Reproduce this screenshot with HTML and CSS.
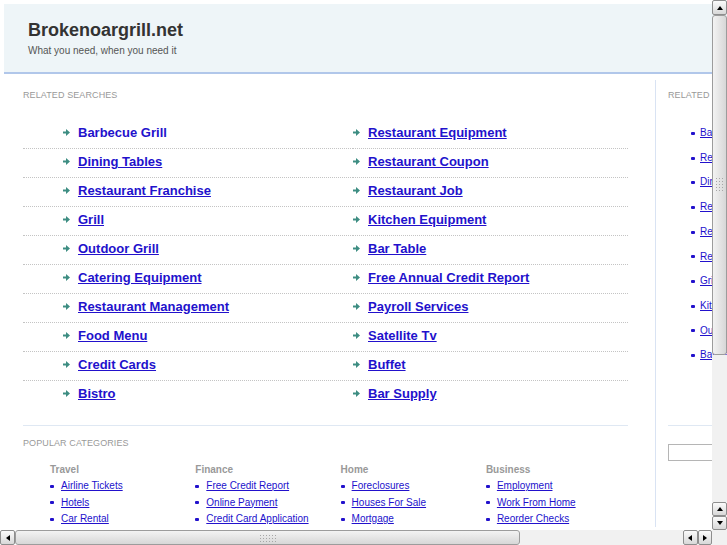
FILE: index.html
```html
<!DOCTYPE html>
<html lang="en">
<head>
    <meta charset="UTF-8">
    <meta name="viewport" content="width=device-width, initial-scale=1.0">
    <title>Brokenoargrill.net</title>
    <link rel="stylesheet" href="styles.css">
</head>
<body>
    <div class="page">
        <div class="header">
            <h1>Brokenoargrill.net</h1>
            <p>What you need, when you need it</p>
        </div>
        <div class="content">
            <div class="main">
                <h3 class="label">Related Searches</h3>
                <ul class="searches">
                    <li class="plain"><svg viewBox="0 0 7 7"><path d="M0 2.5h3V0l4 3.5L3 7V4.5H0z"/></svg><a href="#">Barbecue Grill</a></li>
                    <li><svg viewBox="0 0 7 7"><path d="M0 2.5h3V0l4 3.5L3 7V4.5H0z"/></svg><a href="#">Restaurant Equipment</a></li>
                    <li><svg viewBox="0 0 7 7"><path d="M0 2.5h3V0l4 3.5L3 7V4.5H0z"/></svg><a href="#">Dining Tables</a></li>
                    <li><svg viewBox="0 0 7 7"><path d="M0 2.5h3V0l4 3.5L3 7V4.5H0z"/></svg><a href="#">Restaurant Coupon</a></li>
                    <li><svg viewBox="0 0 7 7"><path d="M0 2.5h3V0l4 3.5L3 7V4.5H0z"/></svg><a href="#">Restaurant Franchise</a></li>
                    <li><svg viewBox="0 0 7 7"><path d="M0 2.5h3V0l4 3.5L3 7V4.5H0z"/></svg><a href="#">Restaurant Job</a></li>
                    <li><svg viewBox="0 0 7 7"><path d="M0 2.5h3V0l4 3.5L3 7V4.5H0z"/></svg><a href="#">Grill</a></li>
                    <li><svg viewBox="0 0 7 7"><path d="M0 2.5h3V0l4 3.5L3 7V4.5H0z"/></svg><a href="#">Kitchen Equipment</a></li>
                    <li><svg viewBox="0 0 7 7"><path d="M0 2.5h3V0l4 3.5L3 7V4.5H0z"/></svg><a href="#">Outdoor Grill</a></li>
                    <li><svg viewBox="0 0 7 7"><path d="M0 2.5h3V0l4 3.5L3 7V4.5H0z"/></svg><a href="#">Bar Table</a></li>
                    <li><svg viewBox="0 0 7 7"><path d="M0 2.5h3V0l4 3.5L3 7V4.5H0z"/></svg><a href="#">Catering Equipment</a></li>
                    <li><svg viewBox="0 0 7 7"><path d="M0 2.5h3V0l4 3.5L3 7V4.5H0z"/></svg><a href="#">Free Annual Credit Report</a></li>
                    <li><svg viewBox="0 0 7 7"><path d="M0 2.5h3V0l4 3.5L3 7V4.5H0z"/></svg><a href="#">Restaurant Management</a></li>
                    <li><svg viewBox="0 0 7 7"><path d="M0 2.5h3V0l4 3.5L3 7V4.5H0z"/></svg><a href="#">Payroll Services</a></li>
                    <li><svg viewBox="0 0 7 7"><path d="M0 2.5h3V0l4 3.5L3 7V4.5H0z"/></svg><a href="#">Food Menu</a></li>
                    <li><svg viewBox="0 0 7 7"><path d="M0 2.5h3V0l4 3.5L3 7V4.5H0z"/></svg><a href="#">Satellite Tv</a></li>
                    <li><svg viewBox="0 0 7 7"><path d="M0 2.5h3V0l4 3.5L3 7V4.5H0z"/></svg><a href="#">Credit Cards</a></li>
                    <li><svg viewBox="0 0 7 7"><path d="M0 2.5h3V0l4 3.5L3 7V4.5H0z"/></svg><a href="#">Buffet</a></li>
                    <li><svg viewBox="0 0 7 7"><path d="M0 2.5h3V0l4 3.5L3 7V4.5H0z"/></svg><a href="#">Bistro</a></li>
                    <li><svg viewBox="0 0 7 7"><path d="M0 2.5h3V0l4 3.5L3 7V4.5H0z"/></svg><a href="#">Bar Supply</a></li>
                </ul>

                <div class="popular">
                    <h3 class="label">Popular Categories</h3>
                    <div class="cats">
                        <div>
                            <h4>Travel</h4>
                            <ul>
                                <li><a href="#">Airline Tickets</a></li>
                                <li><a href="#">Hotels</a></li>
                                <li><a href="#">Car Rental</a></li>
                            </ul>
                        </div>
                        <div>
                            <h4>Finance</h4>
                            <ul>
                                <li><a href="#">Free Credit Report</a></li>
                                <li><a href="#">Online Payment</a></li>
                                <li><a href="#">Credit Card Application</a></li>
                            </ul>
                        </div>
                        <div>
                            <h4>Home</h4>
                            <ul>
                                <li><a href="#">Foreclosures</a></li>
                                <li><a href="#">Houses For Sale</a></li>
                                <li><a href="#">Mortgage</a></li>
                            </ul>
                        </div>
                        <div>
                            <h4>Business</h4>
                            <ul>
                                <li><a href="#">Employment</a></li>
                                <li><a href="#">Work From Home</a></li>
                                <li><a href="#">Reorder Checks</a></li>
                            </ul>
                        </div>
                    </div>
                </div>
            </div>

            <div class="side">
                <h3 class="label">Related Searches</h3>
                <ul class="side-list">
                    <li><a href="#">Barbecue Grill</a></li>
                    <li><a href="#">Restaurant Equipment</a></li>
                    <li><a href="#">Dining Tables</a></li>
                    <li><a href="#">Restaurant Coupon</a></li>
                    <li><a href="#">Restaurant Franchise</a></li>
                    <li><a href="#">Restaurant Job</a></li>
                    <li><a href="#">Grill</a></li>
                    <li><a href="#">Kitchen Equipment</a></li>
                    <li><a href="#">Outdoor Grill</a></li>
                    <li><a href="#">Bar Table</a></li>
                </ul>
                <div class="search-box">
                    <input type="text" name="q">
                </div>
            </div>
        </div>
    </div>

    <!-- window scrollbars -->
    <div class="vbar">
        <div class="sb-btn"><svg viewBox="0 0 6 4"><path d="M0 4L3 0l3 4z"/></svg></div>
        <div class="thumb thumb-v"><div class="grip grip-v"></div></div>
        <div class="track"></div>
        <div class="sb-btn small"><svg viewBox="0 0 6 4"><path d="M0 4L3 0l3 4z"/></svg></div>
        <div class="sb-btn small"><svg viewBox="0 0 6 4"><path d="M0 0h6L3 4z"/></svg></div>
    </div>
    <div class="hbar">
        <div class="sb-btn"><svg class="side-arrow" viewBox="0 0 4 6"><path d="M4 0v6L0 3z"/></svg></div>
        <div class="thumb thumb-h"><div class="grip grip-h"></div></div>
        <div class="track"></div>
        <div class="sb-btn small"><svg class="side-arrow" viewBox="0 0 4 6"><path d="M4 0v6L0 3z"/></svg></div>
        <div class="sb-btn small"><svg class="side-arrow" viewBox="0 0 4 6"><path d="M0 0v6l4-3z"/></svg></div>
    </div>
    <div class="corner track"></div>
</body>
</html>
```

FILE: styles.css
```css
html, body {
    margin: 0;
    height: 100%;
    overflow: hidden;
}
body {
    font-family: 'Liberation Sans', Arial, sans-serif;
    background: #fff;
    color: #333;
}
a {
    color: #2211cc;
}
.page {
    width: 960px;
}
.header {
    margin: 4px 0 0 4px;
    padding: 15px 24px 15px;
    background: #eef5f8;
    border-bottom: 2px solid #b1c7ea;
}
.header h1 {
    margin: 0;
    font-size: 18px;
    line-height: 22px;
    color: #333;
}
.header p {
    margin: 3px 0 0;
    font-size: 10px;
    line-height: 13px;
    color: #555;
}
.content {
    display: flex;
    margin-top: 6px;
}
.main {
    width: 605px;
    padding: 9px 27px 0 23px;
    border-right: 1px solid #d9e3f3;
}
.label {
    margin: 0;
    font-size: 9px;
    line-height: 12px;
    font-weight: normal;
    color: #999;
    text-transform: uppercase;
    letter-spacing: 0.1px;
    white-space: nowrap;
}
.searches {
    list-style: none;
    margin: 19px 0 0;
    padding: 0;
    display: grid;
    grid-template-columns: 330px 1fr;
}
.searches li {
    line-height: 25px;
    padding-bottom: 3px;
    border-bottom: 1px dotted #c4c4c4;
    font-size: 13px;
    font-weight: bold;
    white-space: nowrap;
}
.searches li:nth-child(odd) {
    padding-left: 40px;
}
.searches li:nth-last-child(-n+2) {
    border-bottom: none;
}
.searches svg {
    width: 7px;
    height: 7px;
    margin-right: 8px;
    vertical-align: 1px;
    fill: #3d8d82;
}
.searches .plain a {
    text-decoration: none;
}
.popular {
    margin-top: 16px;
    border-top: 1px solid #dfe8f3;
    padding-top: 11px;
}
.cats {
    display: grid;
    grid-template-columns: repeat(4, 145.3px);
    margin: 13px 0 0 27px;
}
.cats h4 {
    margin: 0;
    font-size: 10px;
    line-height: 16.25px;
    color: #999;
}
.cats ul, .side-list {
    list-style: none;
    margin: 0;
    padding: 0;
}
.cats li {
    font-size: 10px;
    line-height: 16.25px;
    white-space: nowrap;
}
.cats li::before, .side-list li::before {
    content: "";
    display: inline-block;
    width: 4px;
    height: 3px;
    margin-right: 7px;
    vertical-align: middle;
    background: #2211cc;
    border-radius: 1px;
}
.side {
    width: 220px;
    padding: 9px 0 0 12px;
}
.side-list {
    margin-top: 20px;
    padding-left: 23px;
}
.side-list li {
    font-size: 10px;
    line-height: 24.7px;
    white-space: nowrap;
}
.side-list li::before {
    margin-right: 5px;
}
.search-box {
    margin-top: 57px;
    border-top: 1px solid #dfe8f3;
    padding-top: 18px;
}
.search-box input {
    display: block;
    box-sizing: border-box;
    width: 180px;
    height: 17px;
    margin: 0;
    border: 1px solid #b5b5b5;
}

/* fake window scrollbars */
.vbar {
    position: fixed;
    top: 0;
    right: 0;
    width: 15px;
    height: 530px;
    display: flex;
    flex-direction: column;
}
.hbar {
    position: fixed;
    left: 0;
    bottom: 0;
    width: 712px;
    height: 15px;
    display: flex;
}
.corner {
    position: fixed;
    right: 0;
    bottom: 0;
    width: 15px;
    height: 15px;
}
.track {
    flex: 1;
    background-color: #f1f1f1;
    background-image: radial-gradient(circle, #dcdcdc 0.6px, transparent 0.7px);
    background-size: 2px 2px;
}
.sb-btn {
    flex: none;
    width: 15px;
    height: 15px;
    box-sizing: border-box;
    border: 1px solid #8e8e8e;
    border-radius: 2px;
    background: linear-gradient(#fbfbfb, #d8d8d8);
    display: flex;
    align-items: center;
    justify-content: center;
}
.vbar .sb-btn.small {
    height: 14px;
}
.hbar .sb-btn.small {
    width: 14.5px;
}
.sb-btn svg {
    width: 6px;
    height: 4px;
    fill: #000;
}
.sb-btn svg.side-arrow {
    width: 4px;
    height: 6px;
}
.thumb {
    flex: none;
    box-sizing: border-box;
    border: 1px solid #9c9c9c;
    border-radius: 3px;
    display: flex;
    align-items: center;
    justify-content: center;
}
.thumb-v {
    height: 340px;
    background: linear-gradient(to right, #f3f3f3, #d7d7d7);
}
.thumb-h {
    width: 505px;
    background: linear-gradient(#f3f3f3, #d7d7d7);
}
.grip {
    background-image: radial-gradient(circle, #a6a6a6 0.7px, transparent 0.8px);
    background-size: 3px 3px;
}
.grip-v {
    width: 9px;
    height: 16px;
}
.grip-h {
    width: 17px;
    height: 8px;
}
```
